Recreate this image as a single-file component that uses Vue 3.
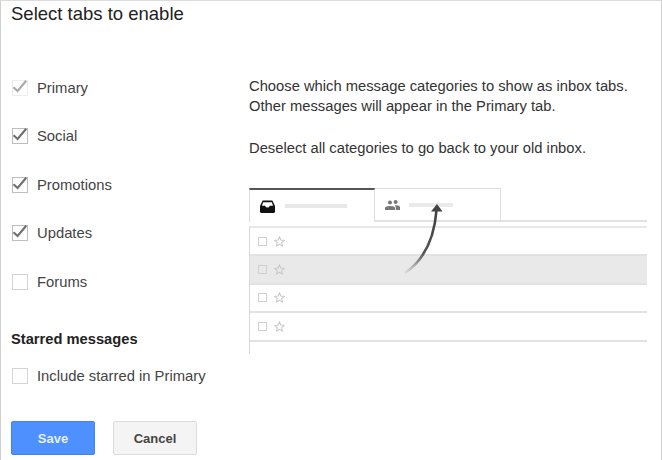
<script setup>
const tabs = [
  { label: 'Primary', state: 'locked' },
  { label: 'Social', state: 'on' },
  { label: 'Promotions', state: 'on' },
  { label: 'Updates', state: 'on' },
  { label: 'Forums', state: 'off' }
]
const rows = [false, true, false, false]
</script>

<template>
  <div class="dialog">
    <h1 class="title">Select tabs to enable</h1>
    <div class="body">
      <div class="left">
        <label v-for="t in tabs" :key="t.label" class="option">
          <span class="box" :class="t.state">
            <svg v-if="t.state !== 'off'" viewBox="0 0 16 16" width="16" height="16">
              <path d="M1.5 8.2 L5.6 12 L14.2 1.8" fill="none" :stroke="t.state === 'locked' ? '#a8a8a8' : '#6e6e6e'" stroke-width="2.1" />
            </svg>
          </span>
          <span>{{ t.label }}</span>
        </label>
        <div class="starred">Starred messages</div>
        <label class="option include">
          <span class="box off"></span>
          <span>Include starred in Primary</span>
        </label>
      </div>
      <div class="right">
        <p class="copy">Choose which message categories to show as inbox tabs.<br>Other messages will appear in the Primary tab.</p>
        <p class="copy second">Deselect all categories to go back to your old inbox.</p>
        <div class="illus">
          <div class="tabbar">
            <div class="tab first">
              <svg viewBox="0 0 14 12" width="15" height="13">
                <path d="M2.5 0.5 H11.5 L14 5.5 V11 Q14 12 13 12 H1 Q0 12 0 11 V5.5 Z M3 2 L1.8 5.2 H4.8 Q5.4 7 7 7 Q8.6 7 9.2 5.2 H12.2 L11 2 Z" fill="#111" fill-rule="evenodd" />
              </svg>
              <span class="bar dark"></span>
            </div>
            <div class="tab second-tab">
              <svg viewBox="0 0 15 10" width="15" height="10">
                <circle cx="5" cy="2.6" r="2" fill="#777" />
                <circle cx="10.6" cy="2" r="2" fill="#777" />
                <path d="M0 10 V8 Q0 6 5 6 Q10 6 10 8 V10 Z M10.8 10 V7.6 Q10.6 6 9.6 5.3 Q15 4.8 15 7.6 V10 Z" fill="#777" />
              </svg>
              <span class="bar light"></span>
            </div>
          </div>
          <div class="rows">
            <div v-for="(hl, i) in rows" :key="i" class="row" :class="{ hl }">
              <span class="mini"></span>
              <svg viewBox="0 0 12 12" width="11" height="11">
                <path d="M6 1 L7.5 4.4 L11.2 4.8 L8.4 7.2 L9.2 10.9 L6 9 L2.8 10.9 L3.6 7.2 L0.8 4.8 L4.5 4.4 Z" fill="none" stroke="#c8c8c8" stroke-width="1.1" />
              </svg>
            </div>
          </div>
          <svg class="arrow" viewBox="0 0 60 90" width="60" height="90">
            <defs>
              <linearGradient id="fade" x1="0" y1="1" x2="0.3" y2="0">
                <stop offset="0" stop-color="#777" stop-opacity="0.1" />
                <stop offset="0.45" stop-color="#555" />
                <stop offset="1" stop-color="#444" />
              </linearGradient>
            </defs>
            <path d="M4 74 C20 63 33 45 35.5 11" fill="none" stroke="url(#fade)" stroke-width="2.6" />
            <path d="M30 12.5 L36 5 L41.5 12.5 Z" fill="#444" />
          </svg>
        </div>
      </div>
    </div>
    <div class="actions">
      <button class="btn save">Save</button>
      <button class="btn cancel">Cancel</button>
    </div>
  </div>
</template>

<style>
html, body { margin: 0; background: #fff; }
</style>

<style scoped>
.dialog {
  width: 662px;
  height: 460px;
  box-sizing: border-box;
  border-left: 1px solid #d0d0d0;
  border-right: 1px solid #d0d0d0;
  border-top: 1px solid #dcdcdc;
  padding: 0 0 0 10px;
  font-family: "Liberation Sans", Arial, sans-serif;
  color: #333;
  display: flex;
  flex-direction: column;
  overflow: hidden;
}
.title {
  margin: 0;
  font-size: 18.5px;
  font-weight: 400;
  line-height: 26px;
  color: #222;
  height: 26px;
}
.body {
  display: flex;
  height: 394px;
  flex: none;
}
.left {
  width: 238px;
  flex: none;
  padding-top: 49px;
  box-sizing: border-box;
}
.option {
  display: flex;
  align-items: center;
  height: 24px;
  margin-bottom: 24.4px;
  font-size: 14.8px;
  color: #444;
  white-space: nowrap;
}
.box {
  width: 14px;
  height: 14px;
  border: 1px solid #d4d4d4;
  margin-left: 1px;
  margin-right: 9px;
  flex: none;
  position: relative;
  background: #fff;
}
.box.on { border-color: #bdbdbd; }
.box.locked { border-color: #ececec; }
.box svg { position: absolute; left: -1px; top: -2px; }
.starred {
  font-size: 14.7px;
  font-weight: 700;
  color: #222;
  line-height: 18px;
  margin-top: 36px;
}
.include { margin: 16px 0 0; }
.right {
  flex: 1;
  min-width: 0;
  padding-top: 49px;
}
.copy {
  margin: 0;
  font-size: 14.75px;
  line-height: 20px;
  color: #333;
  height: 40px;
  white-space: nowrap;
}
.copy.second {
  margin-top: 22px;
  height: 20px;
}
.illus {
  margin-top: 30px;
  width: 398px;
  position: relative;
}
.tabbar {
  display: flex;
  height: 34px;
  border-bottom: 2px solid #e2e2e2;
  box-sizing: border-box;
}
.tab {
  width: 126px;
  height: 34px;
  box-sizing: border-box;
  display: flex;
  align-items: center;
  background: #fff;
}
.tab.first {
  border-top: 2px solid #555;
  border-left: 1px solid #ddd;
  border-right: 1px solid #ddd;
  padding-left: 10px;
}
.tab.second-tab {
  border-top: 1px solid #ddd;
  border-right: 1px solid #ddd;
  border-bottom: 2px solid #e2e2e2;
  padding-left: 10px;
}
.bar {
  display: block;
  height: 4px;
  background: #e8e8e8;
}
.bar.dark { width: 62px; margin-left: 10px; }
.bar.light { width: 44px; margin-left: 9px; background: #eaeaea; }
.rows {
  margin-top: 4px;
  border-top: 2px solid #e8e8e8;
  border-left: 1px solid #d8d8d8;
  padding-bottom: 12px;
}
.row {
  height: 28.4px;
  box-sizing: border-box;
  border-bottom: 2px solid #e2e2e2;
  display: flex;
  align-items: center;
  padding-left: 8px;
  gap: 7px;
}
.row.hl { background: #e9e9e9; }
.mini {
  width: 7px;
  height: 7px;
  border: 1px solid #d0d0d0;
  display: block;
}
.arrow {
  position: absolute;
  left: 152px;
  top: 11px;
}
.actions {
  display: flex;
  gap: 18px;
}
.btn {
  width: 84px;
  height: 34px;
  box-sizing: border-box;
  font-family: "Liberation Sans", Arial, sans-serif;
  font-size: 13px;
  font-weight: 700;
  border-radius: 2px;
  padding: 0;
}
.save {
  background: #4d90fe;
  border: 1px solid #3f84ee;
  color: #e6efff;
}
.cancel {
  background: #f4f4f4;
  border: 1px solid #dcdcdc;
  color: #444;
}
</style>
